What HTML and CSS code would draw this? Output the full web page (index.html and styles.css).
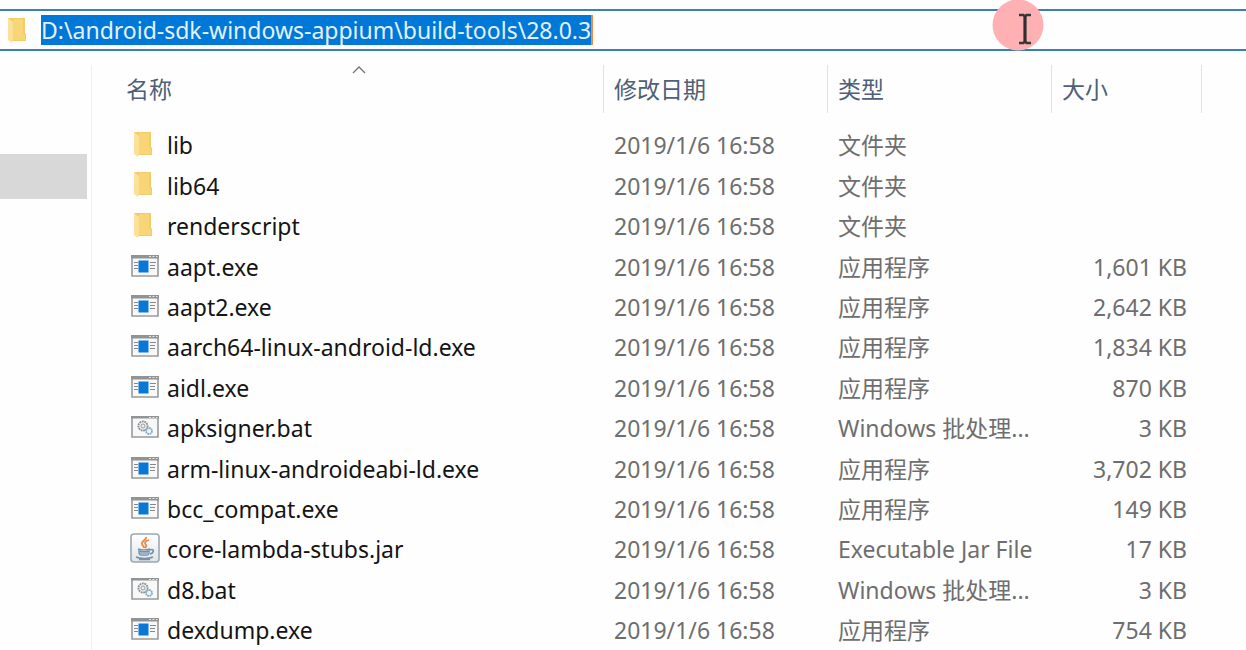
FILE: index.html
```html
<!DOCTYPE html>
<html lang="zh-CN">
<head>
  <meta charset="UTF-8" />
  <meta name="viewport" content="width=device-width, initial-scale=1.0" />
  <title>build-tools\28.0.3</title>
  <link rel="stylesheet" href="styles.css">
</head>
<body>

  <!-- Shared file icons -->
  <svg class="sprite" aria-hidden="true">
    <defs>
      <linearGradient id="folderFront" x1="0" y1="0" x2="1" y2="1">
        <stop offset="0" stop-color="#fbe3a0" />
        <stop offset="1" stop-color="#fbdf90" />
      </linearGradient>
      <linearGradient id="jarBack" x1="0" y1="0" x2="0" y2="1">
        <stop offset="0" stop-color="#ffffff" />
        <stop offset="1" stop-color="#dfe4e8" />
      </linearGradient>
    </defs>
    <symbol id="folder" viewBox="0 0 20 27">
      <path d="M1 1h17v15l1 1v7H5z" fill="#f3cb6a" />
      <path d="M6 2h10v14l2 2v5H6z" fill="#f8d678" />
      <path d="M1 1l5 4v17l-1 4-4-3z" fill="url(#folderFront)" />
    </symbol>
    <symbol id="exe" viewBox="0 0 28 22">
      <path d="M1 1h26v20H1z" fill="#f8f8f8" stroke="#97999b" stroke-width="1.6" />
      <path d="M0 0h28v3.500H0z" fill="#919395" />
      <path d="M18 1.500h2M21.500 1.500h2M25 1.500h1.500" stroke="#e4e4e4" />
      <path d="M3 7.500h4M3 10.500h4M3 13.500h4M19 7.500h6M19 10.500h5M19 13.500h5" stroke="#85898d" stroke-width="1.200" />
      <path d="M7.500 5.500h10v12h-10z" fill="#0878d7" />
    </symbol>
    <symbol id="bat" viewBox="0 0 28 22">
      <path d="M1 1h26v20H1z" fill="#f8f8f8" stroke="#97999b" stroke-width="1.600" />
      <path d="M0 0h28v2.500H0z" fill="#919395" />
      <path d="M18 1.500h2M21.500 1.500h2M25 1.500h1.500" stroke="#e4e4e4" />
      <circle cx="12" cy="10" r="4.600" fill="#eeeeee" stroke="#8c8f92" stroke-width="1.800" stroke-dasharray="1.800 .7" />
      <circle cx="12" cy="10" r="2" fill="none" stroke="#9b9ea1" />
      <circle cx="18" cy="15" r="3" fill="#e8f4fa" stroke="#86aec6" stroke-width="1.800" stroke-dasharray="1.800 .5" />
    </symbol>
    <symbol id="jar" viewBox="0 0 30 30">
      <rect x="1" y="1" width="28" height="28" rx="3" fill="url(#jarBack)" stroke="#9ba7b2" stroke-width="1.600" />
      <path d="M16 4c1 3-5 4-4 7 0 1 2 2 2 4M19 7c-4 1-5 3-3 5 1 1 0 2-1 3" fill="none" stroke="#e98a45" stroke-width="1.800" />
      <path d="M8 16c3 1 9 1 12 0M9 18c0 4 1 4 5 4s5 0 5-4c-3 1-7 1-10 0zM20 17c5-2 4 3 0 4" fill="none" stroke="#7591a8" stroke-width="1.600" />
      <path d="M9.500 19h9.500l-1 3h-7z" fill="#9db2c3" />
      <path d="M6 24c4 2 13 2 17 0M9 26.500h11" fill="none" stroke="#7591a8" stroke-width="1.400" />
    </symbol>
  </svg>

  <div class="address-bar">
    <svg class="icon-folder"><use href="#folder" /></svg>
    <input type="text" class="address" aria-label="地址" value="D:\android-sdk-windows-appium\build-tools\28.0.3">
    <svg class="pointer" viewBox="0 0 52 52" aria-hidden="true">
      <circle cx="26" cy="25" r="25.500" fill="#ffb0b2" />
      <path d="M27 15h4.500l1.500 1.500 1.500-1.500H39M27 43h4.500l1.500-1.500 1.500 1.500H39" fill="none" stroke="#383838" stroke-width="2.400" />
      <path d="M33 16v26" stroke="#303030" stroke-width="3.200" />
    </svg>
  </div>

  <div class="explorer">
    <nav class="sidebar">
      <div class="sidebar-selected"></div>
    </nav>

    <main class="file-pane">
      <table class="files">
        <thead>
          <tr>
            <th class="col-name"><button type="button" class="heading">名称<svg class="sort" viewBox="0 0 14 8"><path d="M1 7l6-6 6 6" /></svg></button></th>
            <th class="col-date"><button type="button" class="heading">修改日期</button></th>
            <th class="col-type"><button type="button" class="heading">类型</button></th>
            <th class="col-size"><button type="button" class="heading">大小</button></th>
          </tr>
        </thead>
        <tbody>
          <tr><td class="name"><div class="file"><svg class="icon-folder"><use href="#folder" /></svg>lib</div></td><td>2019/1/6 16:58</td><td>文件夹</td><td></td></tr>
          <tr><td class="name"><div class="file"><svg class="icon-folder"><use href="#folder" /></svg>lib64</div></td><td>2019/1/6 16:58</td><td>文件夹</td><td></td></tr>
          <tr><td class="name"><div class="file"><svg class="icon-folder"><use href="#folder" /></svg>renderscript</div></td><td>2019/1/6 16:58</td><td>文件夹</td><td></td></tr>
          <tr><td class="name"><div class="file"><svg class="icon-app"><use href="#exe" /></svg>aapt.exe</div></td><td>2019/1/6 16:58</td><td>应用程序</td><td class="size">1,601 KB</td></tr>
          <tr><td class="name"><div class="file"><svg class="icon-app"><use href="#exe" /></svg>aapt2.exe</div></td><td>2019/1/6 16:58</td><td>应用程序</td><td class="size">2,642 KB</td></tr>
          <tr><td class="name"><div class="file"><svg class="icon-app"><use href="#exe" /></svg>aarch64-linux-android-ld.exe</div></td><td>2019/1/6 16:58</td><td>应用程序</td><td class="size">1,834 KB</td></tr>
          <tr><td class="name"><div class="file"><svg class="icon-app"><use href="#exe" /></svg>aidl.exe</div></td><td>2019/1/6 16:58</td><td>应用程序</td><td class="size">870 KB</td></tr>
          <tr><td class="name"><div class="file"><svg class="icon-app"><use href="#bat" /></svg>apksigner.bat</div></td><td>2019/1/6 16:58</td><td>Windows 批处理...</td><td class="size">3 KB</td></tr>
          <tr><td class="name"><div class="file"><svg class="icon-app"><use href="#exe" /></svg>arm-linux-androideabi-ld.exe</div></td><td>2019/1/6 16:58</td><td>应用程序</td><td class="size">3,702 KB</td></tr>
          <tr><td class="name"><div class="file"><svg class="icon-app"><use href="#exe" /></svg>bcc_compat.exe</div></td><td>2019/1/6 16:58</td><td>应用程序</td><td class="size">149 KB</td></tr>
          <tr><td class="name"><div class="file"><svg class="icon-jar"><use href="#jar" /></svg>core-lambda-stubs.jar</div></td><td>2019/1/6 16:58</td><td>Executable Jar File</td><td class="size">17 KB</td></tr>
          <tr><td class="name"><div class="file"><svg class="icon-app"><use href="#bat" /></svg>d8.bat</div></td><td>2019/1/6 16:58</td><td>Windows 批处理...</td><td class="size">3 KB</td></tr>
          <tr><td class="name"><div class="file"><svg class="icon-app"><use href="#exe" /></svg>dexdump.exe</div></td><td>2019/1/6 16:58</td><td>应用程序</td><td class="size">754 KB</td></tr>
        </tbody>
      </table>
    </main>
  </div>

</body>
</html>
```
FILE: styles.css
```css
* {
  box-sizing: border-box;
}
body {
  margin: 0;
  background-color: #fefefe;
  font-family: "Noto Sans", "Noto Sans CJK SC", sans-serif;
  font-size: 23px;
  line-height: 30px;
  color: #6e6e6e;
}
.sprite {
  position: absolute;
  width: 0;
  height: 0;
}

/* Address bar */
.address-bar {
  position: relative;
  display: flex;
  align-items: center;
  gap: 14px;
  height: 42px;
  margin-top: 9px;
  padding-left: 7px;
  border-top: 2px solid #3a7fb8;
  border-bottom: 2px solid #3a7fb8;
}
.address {
  field-sizing: content;
  height: 30px;
  padding: 0;
  border: 0;
  border-right: 2px solid #f08a3c;
  background-color: #0078d7;
  color: #e4f1fc;
  font: inherit;
}
.pointer {
  position: absolute;
  top: -11px;
  right: 202px;
  width: 52px;
  height: 52px;
}

/* Panes */
.explorer {
  display: flex;
  height: calc(100vh - 51px);
  padding-top: 14px;
  overflow: hidden;
}
.sidebar {
  width: 92px;
  padding: 89px 4px 0 0;
  border-right: 1px solid #efefef;
}
.sidebar-selected {
  height: 45px;
  background-color: #d8d8d8;
}
.file-pane {
  flex: 1;
  padding-right: 44px;
}

/* File table */
.files {
  width: 100%;
  table-layout: fixed;
  border-collapse: collapse;
}
.files th {
  height: 60px;
  padding: 0;
  font-weight: normal;
  vertical-align: top;
}
.col-date,
.col-type {
  width: 224px;
}
.col-size {
  width: 150px;
}
.heading {
  position: relative;
  display: block;
  width: 100%;
  height: 48px;
  padding: 0 0 0 10px;
  border: 0;
  border-right: 1px solid #e2e2e2;
  background: none;
  color: #4d6078;
  font: inherit;
  text-align: left;
}
.col-name .heading {
  padding-left: 34px;
}
.sort {
  position: absolute;
  top: 1px;
  left: 260px;
  width: 14px;
  height: 8px;
  fill: none;
  stroke: #777;
  stroke-width: 1.4;
}
.files td {
  height: 40px;
  padding: 0 0 0 10px;
  white-space: nowrap;
}
/* Rows average a little over 40px */
.files tbody tr:nth-child(5n+2) td,
.files tbody tr:nth-child(5n+4) td {
  height: 41px;
}
.files .name {
  padding-left: 38px;
  color: #141414;
}
.files .size {
  padding-right: 15px;
  text-align: right;
}
.file {
  display: flex;
  align-items: center;
  height: 30px;
}

/* Icons */
.icon-folder,
.icon-app,
.icon-jar {
  flex: none;
}
.icon-folder {
  width: 20px;
  height: 27px;
}
.icon-app {
  width: 28px;
  height: 22px;
}
.icon-jar {
  width: 30px;
  height: 30px;
}
.file .icon-folder {
  margin: 0 14px 2px 3px;
}
.file .icon-app {
  margin: 0 8px 2px 1px;
}
.file .icon-jar {
  margin: 0 7px 2px 0;
}
```
